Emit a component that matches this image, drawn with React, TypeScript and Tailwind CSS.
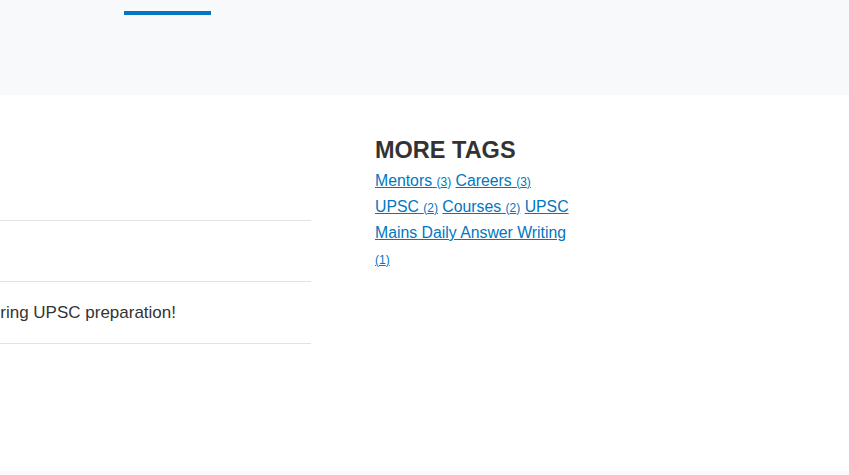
import React from "react";

const tags = [
  { name: "Mentors", count: 3 },
  { name: "Careers", count: 3 },
  { name: "UPSC", count: 2 },
  { name: "Courses", count: 2 },
  { name: "UPSC Mains Daily Answer Writing", count: 1 },
];

export default function App() {
  return (
    <div className="h-[475px] w-full overflow-hidden bg-white font-['Liberation_Sans',Arial,sans-serif] text-[#333]">
      {/* Header band with active nav underline */}
      <div className="h-[95px] bg-[#f8f9fb] pt-[11px]">
        <div className="ml-[124px] h-[4px] w-[87px] bg-[#0077c0]" />
      </div>

      {/* Main content */}
      <div className="flex h-[376px]">
        {/* Left column - post list (scrolled partially out of view) */}
        <div className="w-[311px] shrink-0 pt-[125px]">
          <div className="border-t border-[#e2e2e2] h-[61px]" />
          <div className="border-t border-b border-[#e2e2e2] h-[63px] flex items-center">
            <div className="flex w-[176px] justify-end">
              <span className="whitespace-nowrap text-[17px] leading-none">
                How to stay motivated during UPSC preparation!
              </span>
            </div>
          </div>
        </div>

        {/* Right column - tags */}
        <div className="ml-[64px] w-[196px] pt-[41px]">
          <h3 className="text-[23.5px] font-bold leading-[28px] text-[#333]">MORE TAGS</h3>
          <div className="mt-[4px] text-[15.8px] leading-[26px]">
            {tags.map((t) => (
              <React.Fragment key={t.name + t.count}>
                <a href="#" className="text-[#0077c0] underline">
                  {t.name} <span className="text-[12px] leading-none">({t.count})</span>
                </a>{" "}
              </React.Fragment>
            ))}
          </div>
        </div>
      </div>

      {/* Footer start */}
      <div className="h-[4px] bg-[#f8f9fb]" />
    </div>
  );
}
